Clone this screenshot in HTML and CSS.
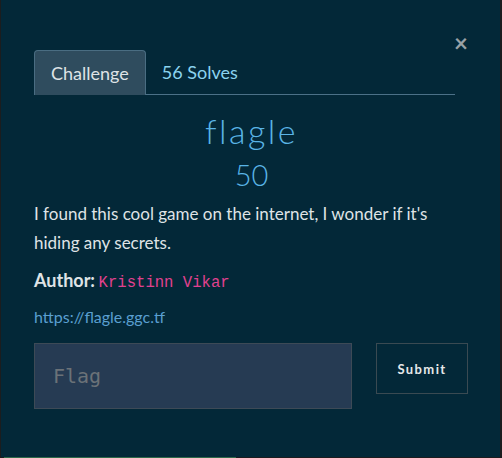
FILE: index.html
```html
<!DOCTYPE html>
<html>
<head>
<meta charset="utf-8">
<link rel="stylesheet" href="styles.css">
</head>
<body>
<div class="modal">
  <button class="close" aria-label="Close">×</button>
  <div class="tabs">
    <div class="tab active">Challenge</div>
    <div class="tab">56 Solves</div>
  </div>
  <h2 class="title">flagle</h2>
  <h3 class="value">50</h3>
  <p class="desc">I found this cool game on the internet, I wonder if it's hiding any secrets.</p>
  <p class="author"><strong>Author:</strong> <code>Kristinn Vikar</code></p>
  <p class="link"><a href="#">https://flagle.ggc.tf</a></p>
  <div class="submit-row">
    <input class="flag" type="text" placeholder="Flag">
    <button class="submit">Submit</button>
  </div>
</div>
<div class="backdrop-row"><span class="green"></span></div>
</body>
</html>
```
FILE: styles.css
```css
html, body {
  margin: 0;
  padding: 0;
  background: #1b1d1f;
  height: 458px;
  overflow: hidden;
}
.modal {
  position: relative;
  margin: 0 2px 0 1px;
  height: 457px;
  background: #032838;
  font-family: Lato, "Open Sans", sans-serif;
  color: #dfe3e6;
  padding: 50px 31px 0 33px;
  box-sizing: border-box;
}
.close {
  position: absolute;
  top: 31px;
  right: 32px;
  background: none;
  border: 0;
  color: #98a1a6;
  font-size: 24px;
  font-weight: 700;
  font-family: Lato, sans-serif;
  padding: 0;
  line-height: 24px;
}
.tabs {
  display: flex;
  border-bottom: 1px solid #4c7188;
  height: 44px;
  margin-right: 14px;
}
.tab {
  padding: 0 16px;
  font-size: 18px;
  line-height: 44px;
  color: #8bd3ef;
}
.tab.active {
  background: #2f4c5e;
  border: 1px solid #4a6d82;
  border-bottom: 0;
  border-radius: 4px 4px 0 0;
  color: #dfe3e6;
  margin-bottom: -1px;
}
.title {
  margin: 12px 0 0;
  text-align: center;
  font-weight: 300;
  font-size: 34px;
  line-height: 48px;
  color: #5ab4e6;
  letter-spacing: 2.5px;
}
.value {
  margin: 2px 0 0;
  text-align: center;
  font-weight: 300;
  font-size: 29px;
  line-height: 36px;
  color: #5ab4e6;
}
.desc {
  margin: 6px 0 0;
  font-size: 17px;
  line-height: 29px;
}
.author {
  margin: 9px 0 0;
  font-size: 18px;
  line-height: 29px;
}
.author strong { font-weight: 700; }
.author code {
  font-family: "Liberation Mono", "DejaVu Sans Mono", monospace;
  font-size: 15.6px;
  color: #e0418f;
  margin-left: -1px;
}
.link {
  margin: 5px 0 0;
  font-size: 16px;
  line-height: 28px;
}
.link a {
  color: #5a9fd0;
  text-decoration: none;
}
.submit-row {
  display: flex;
  align-items: flex-start;
  margin-top: 12px;
  gap: 24px;
}
.flag {
  width: 318px;
  height: 66px;
  flex: none;
  box-sizing: border-box;
  background: #263b53;
  border: 1px solid #3d4a56;
  padding: 0 18px;
  font-family: "DejaVu Sans Mono", monospace;
  font-size: 20px;
  color: #ccc;
}
.flag::placeholder { color: #6b7278; }
.submit {
  width: 92px;
  height: 51px;
  flex: none;
  box-sizing: border-box;
  background: transparent;
  border: 1px solid #3a4a52;
  color: #e6e8ea;
  font-family: Lato, sans-serif;
  font-weight: 700;
  font-size: 13px;
  letter-spacing: 1.4px;
}
.backdrop-row {
  height: 1px;
  display: flex;
}
.green {
  margin-left: 4px;
  width: 232px;
  background: #2f6a4a;
}
```
